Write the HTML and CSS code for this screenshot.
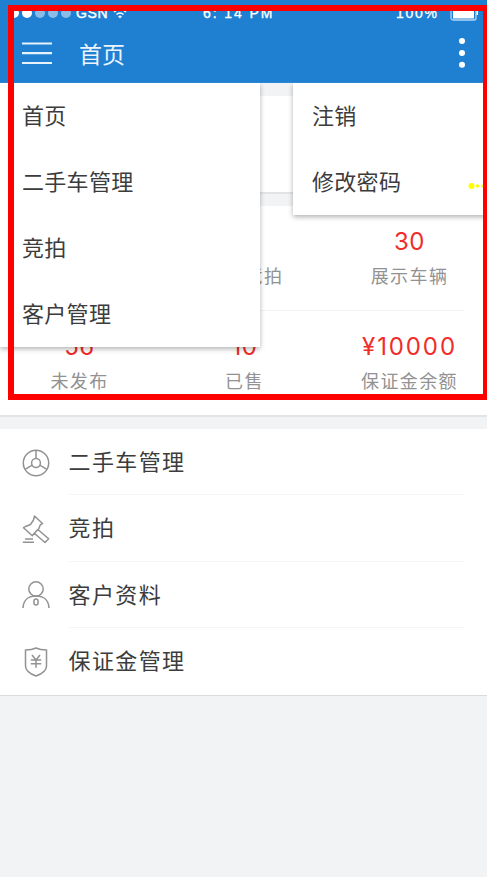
FILE: index.html
```html
<!DOCTYPE html>
<html lang="zh-CN">
<head>
<meta charset="utf-8">
<title>首页</title>
<link rel="stylesheet" href="styles.css">
</head>
<body>
<div class="app">
  <header class="header">
    <div class="status">
      <div class="signal"><i></i><i></i><i class="dim"></i><i class="dim"></i><i class="dim"></i></div>
      <span class="carrier">GSN</span>
      <svg class="wifi" width="14" height="11" viewBox="0 0 14 11"><path d="M1 4Q7-1 13 4M3.500 6.500Q7 3.500 10.500 6.500" fill="none" stroke="#fff" stroke-width="1.600"/><path d="M5 8.300Q7 6.500 9 8.300L7 10.500Z" fill="#fff"/></svg>
      <span class="time">6:&nbsp;14 PM</span>
      <span class="percent">100%</span>
      <svg class="battery" width="29" height="16" viewBox="0 0 29 16"><rect x="1" y="1" width="25" height="14" rx="2" fill="none" stroke="#b5d6f2" stroke-width="1.300"/><rect x="3" y="3" width="21" height="10.500" fill="#fff"/><path d="M27.300 5v5" stroke="#fff" stroke-width="1.500"/></svg>
    </div>
    <div class="bar">
      <svg class="burger" width="30" height="23" viewBox="0 0 30 23"><path d="M0 1.500H30M0 11.200H30M0 21H30" stroke="#e6f2fc" stroke-width="2.200"/></svg>
      <h1 class="title">首页</h1>
      <svg class="more" width="8" height="32" viewBox="0 0 8 32"><g fill="#fff"><circle cx="4" cy="4" r="3"/><circle cx="4" cy="16" r="3"/><circle cx="4" cy="27.700" r="3"/></g></svg>
    </div>
  </header>

  <section class="card summary"></section>

  <section class="card stats">
    <div class="stat-row">
      <div class="stat"></div>
      <div class="stat"><b>&nbsp;</b><span class="partial">竞拍</span></div>
      <div class="stat"><b>30</b><span>展示车辆</span></div>
    </div>
    <div class="divider"></div>
    <div class="stat-row">
      <div class="stat"><b>56</b><span>未发布</span></div>
      <div class="stat"><b>10</b><span>已售</span></div>
      <div class="stat"><b class="money">¥10000</b><span>保证金余额</span></div>
    </div>
  </section>

  <nav class="card list">
    <a class="item">
      <svg class="icon" viewBox="0 0 28 30"><circle cx="14" cy="15" r="12.700"/><circle cx="14" cy="15" r="4.400"/><path d="M14 2.300V10.600M10.200 17.200L3 21.400M17.800 17.200L25 21.400"/></svg>
      <span>二手车管理</span>
    </a>
    <a class="item">
      <svg class="icon" viewBox="0 0 28 30"><path d="M12.500 2L20.500 9.500L18.300 10.800L16.800 14.700L12.300 19.200L10.300 21.700L1.500 13.700L4.200 12.200L8.500 10.500L11.500 6ZM12.300 19.200L15.800 15.500L26.700 24.800L23 28.500ZM3 24.900H11M.8 28.200H12"/></svg>
      <span>竞拍</span>
    </a>
    <a class="item">
      <svg class="icon" viewBox="0 0 28 30"><circle cx="14" cy="9" r="7.200"/><path d="M1 28C1.300 19.500 7 15.900 14 15.900S26.700 19.500 27 28"/><rect x="12" y="19" width="4" height="6" rx="2"/></svg>
      <span>客户资料</span>
    </a>
    <a class="item">
      <svg class="icon" viewBox="0 0 28 30"><path d="M14 1C11 2.500 7.500 3 3.500 3V19C3.500 23.500 8.500 27 14 29C19.500 27 24.500 23.500 24.500 19V3C20.500 3 17 2.500 14 1ZM10 8L14 13L18 8M14 13V20.800M8.800 13H19.200M8.800 16.700H19.200"/></svg>
      <span>保证金管理</span>
    </a>
  </nav>

  <div class="menu menu-main">
    <a>首页</a><a>二手车管理</a><a>竞拍</a><a>客户管理</a>
  </div>
  <div class="menu menu-more">
    <a>注销</a><a>修改密码</a>
  </div>
  <svg class="marker" width="18" height="8" viewBox="0 0 18 8"><g fill="#ff0"><circle cx="4.500" cy="4" r="3"/><circle cx="10.500" cy="4" r="1.700"/><circle cx="15.500" cy="4" r="1.500"/></g></svg>
  <div class="frame"></div>
</div>
</body>
</html>
```
FILE: styles.css
```css
* { box-sizing: border-box; }
body {
  margin: 0;
  background: #f1f3f5;
  font-family: "Liberation Sans", "Noto Sans CJK SC", sans-serif;
  color: #3c3c3c;
}
.app { position: relative; height: 877px; overflow: hidden; }
.header { height: 83px; background: #1f80d2; border-bottom: 1px solid #2c88d6; color: #fff; }
.status {
  height: 24px;
  display: grid;
  grid-template-columns: 76px 37px 90px 193px 54px auto;
  align-items: center;
  padding-top: 2px;
  font-size: 14px;
  letter-spacing: .6px;
  white-space: nowrap;
}
.signal { display: flex; gap: 3px; padding-left: 9px; }
.signal i { width: 10px; height: 10px; border-radius: 50%; background: #fff; }
.signal .dim { background: #8bbce8; }
.carrier { -webkit-text-stroke: .4px #fff; }
.time, .percent { -webkit-text-stroke: .3px #fff; }
.time { letter-spacing: 1.900px; }
.percent { letter-spacing: 1.700px; }
.battery { margin-top: -1px; }
.bar { height: 58px; display: flex; align-items: center; padding: 0 21px 0 22px; }
.title { margin: 4px auto 0 27px; font-size: 23px; font-weight: 400; line-height: 34px; color: #eaf4fd; }

.card { background: #fff; border-bottom: 2px solid #e2e4e6; }
.summary { margin-top: 13px; height: 98px; }
.stats { margin-top: 12px; height: 211px; }
.stat-row { display: grid; grid-template-columns: repeat(3, 165px); margin-left: -3px; height: 104px; padding-top: 20px; }
.stat { display: flex; flex-direction: column; align-items: center; }
.stat b { font: 400 24px/32px Inter, "Liberation Sans", sans-serif; letter-spacing: .6px; color: #ef2d29; }
.stat .money { letter-spacing: 1.900px; }
.stat span { margin-top: 6px; font-size: 18px; line-height: 27px; letter-spacing: 1.400px; color: #929292; }
.stat .partial { padding-left: 39px; }
.divider { height: 1px; margin: 0 23px; background: #f4f4f4; }

.list { margin-top: 12px; height: 267px; border-bottom: 1px solid #d9dbdd; }
.item { height: 66.400px; display: flex; align-items: center; padding: 0 23px 0 22px; font-size: 22px; }
.item span { flex: 1; height: 100%; margin-left: 18.500px; line-height: 68.400px; letter-spacing: 1.400px; border-bottom: 1px solid #f5f5f5; }
.item:last-child span { border: 0; }
.icon { width: 28px; height: 30px; margin-top: 1px; flex: none; fill: none; stroke: #929292; stroke-width: 1.500; stroke-linejoin: round; }

.menu { position: absolute; top: 83px; background: #fff; box-shadow: 0 2px 5px rgba(0, 0, 0, .3); clip-path: inset(0 -8px -8px -8px); }
.menu a { display: block; height: 66px; line-height: 68px; font-size: 22px; letter-spacing: .3px; }
.menu-main { left: 0; width: 260px; padding-left: 22px; }
.menu-more { left: 293px; right: 0; padding-left: 19px; }
.marker { position: absolute; left: 467px; top: 182px; }
.frame { position: absolute; left: 8px; top: 5px; width: 481px; height: 395px; border: 6px solid #f00; }
```
